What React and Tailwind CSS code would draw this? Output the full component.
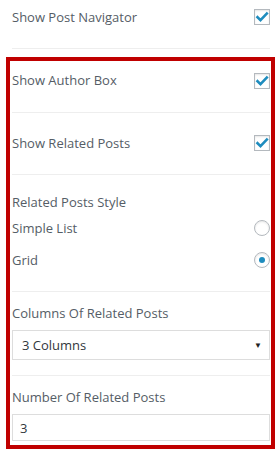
import React from "react";

function Check() {
  return (
    <div className="w-4 h-4 border border-[#b4b9be] bg-white shadow-[inset_0_1px_2px_rgba(0,0,0,0.1)] flex items-center justify-center">
      <svg width="14" height="14" viewBox="0 0 14 14">
        <path d="M2.5 7.2 L5.5 10.2 L11.8 3.6" fill="none" stroke="#1e8cbe" strokeWidth="2.6" strokeLinecap="square" />
      </svg>
    </div>
  );
}

function Radio({ on }) {
  return (
    <div className="w-4 h-4 rounded-full border border-[#b4b9be] bg-white shadow-[inset_0_1px_2px_rgba(0,0,0,0.1)] flex items-center justify-center">
      {on && <div className="w-[6px] h-[6px] rounded-full bg-[#1e8cbe]" />}
    </div>
  );
}

function Sep() {
  return <div className="h-px bg-[#eeeeee]" />;
}

export default function App() {
  return (
    <div className="w-[279px] h-[462px] bg-white text-[13px] leading-[20px] text-[#555d66] font-['Open_Sans',sans-serif] overflow-hidden">
      <div className="pl-3 pr-[9px]">
        <div className="h-[48px] pt-[7px] flex justify-between items-start">
          <span>Show Post Navigator</span>
          <div className="mt-[2px]"><Check /></div>
        </div>
        <Sep />
      </div>
      <div className="mt-[8px] ml-[6px] w-[269px] border-4 border-[#c00000] pl-[2px] pr-[1px] pb-[4px]">
        <div className="h-[51px] pt-[9px] flex justify-between items-start">
          <span>Show Author Box</span>
          <div className="mt-[3px]"><Check /></div>
        </div>
        <Sep />
        <div className="h-[61px] pt-[20px] flex justify-between items-start">
          <span>Show Related Posts</span>
          <div className="mt-[2px]"><Check /></div>
        </div>
        <Sep />
        <div className="pt-[17px] pb-[21px]">
          <div>Related Posts Style</div>
          <div className="mt-[6px] flex justify-between items-start">
            <span>Simple List</span>
            <div className="mt-[2px]"><Radio /></div>
          </div>
          <div className="mt-[12px] flex justify-between items-start">
            <span>Grid</span>
            <div className="mt-[2px]"><Radio on /></div>
          </div>
        </div>
        <Sep />
        <div className="pt-[11px] pb-[15px]">
          <div>Columns Of Related Posts</div>
          <div className="mt-[7px] h-[30px] border border-[#dddddd] flex items-center justify-between pl-[9px] pr-[7px] text-[#32373c]">
            <span>3 Columns</span>
            <span className="text-[8px] leading-none text-[#222]">▼</span>
          </div>
        </div>
        <Sep />
        <div className="pt-[11px]">
          <div>Number Of Related Posts</div>
          <div className="mt-[7px] h-[27px] border border-[#dddddd] flex items-center pl-[7px] text-[#32373c]">
            <span>3</span>
          </div>
        </div>
      </div>
    </div>
  );
}
